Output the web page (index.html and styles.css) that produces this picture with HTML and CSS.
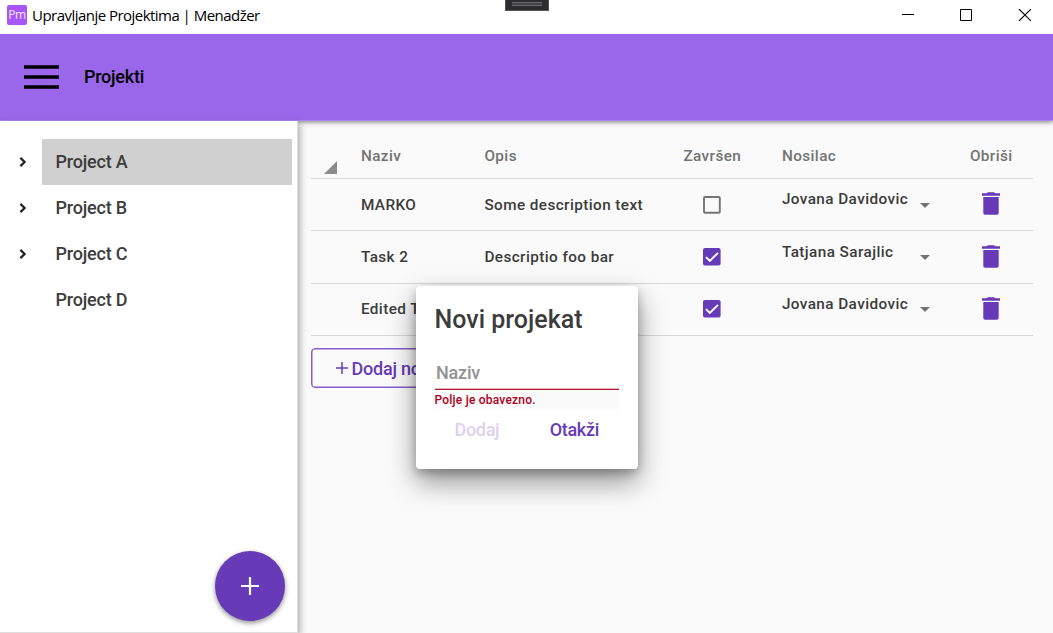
FILE: index.html
```html
<!DOCTYPE html>
<html lang="sr-Latn">
<head>
<meta charset="utf-8">
<title>Upravljanje Projektima | Menadžer</title>
<link rel="stylesheet" href="styles.css">
</head>
<body>
<svg class="defs" width="0" height="0">
  <symbol id="trash" viewBox="0 0 18 23"><path d="M0 1.3h4.6L6 .2h6l1.4 1.1H18v2.5H0zM1.3 5h15.4v16a1.8 1.8 0 0 1-1.8 1.8H3.1A1.8 1.8 0 0 1 1.3 21z"/></symbol>
  <symbol id="chevron" viewBox="0 0 8 10"><path d="M1.4 .9 5.6 5 1.4 9.1" fill="none" stroke="#222" stroke-width="2.2"/></symbol>
  <symbol id="box-off" viewBox="0 0 18 18"><rect x="1" y="1" width="15.8" height="15.8" rx="1" fill="none" stroke="#747474" stroke-width="1.9"/></symbol>
  <symbol id="box-on" viewBox="0 0 18 18"><rect width="17.6" height="17.6" rx="2" fill="#673ab7"/><path d="M3 9.2 6.8 13 15 4.8" fill="none" stroke="#fff" stroke-width="1.9"/></symbol>
</svg>
<div class="window">
  <div class="titlebar">
    <span class="logo">Pm</span>
    <span class="title">Upravljanje Projektima | Menadžer</span>
    <div class="controls">
      <svg width="12" height="12"><path d="M0 5.5h12" stroke="#000"/></svg>
      <svg width="12" height="12"><path d="M.5.5h11v11H.5z" fill="none" stroke="#000"/></svg>
      <svg width="13" height="12"><path d="M1 0 13 12M13 0 1 12" stroke="#000" stroke-width="1.1"/></svg>
    </div>
    <div class="grip"><i></i></div>
  </div>
  <header class="appbar">
    <svg width="35" height="24"><path d="M0 2h35M0 12h35M0 22h35" stroke="#000" stroke-width="3.5"/></svg>
    <span class="page">Projekti</span>
  </header>
  <div class="body">
    <aside class="sidebar">
      <ul class="tree">
        <li><svg class="chev"><use href="#chevron"/></svg><span class="node selected">Project A</span></li>
        <li><svg class="chev"><use href="#chevron"/></svg><span class="node">Project B</span></li>
        <li><svg class="chev"><use href="#chevron"/></svg><span class="node">Project C</span></li>
        <li><span class="chev"></span><span class="node">Project D</span></li>
      </ul>
      <button class="fab"><svg width="18" height="18"><path d="M9 0v18M0 9h18" stroke="#fff" stroke-width="2.2"/></svg></button>
    </aside>
    <main class="content">
      <div class="grid">
        <div class="row head">
          <span class="corner"><svg width="13" height="13"><path d="M13 0v13H0z" fill="#8c8c8c"/></svg></span>
          <span>Naziv</span><span>Opis</span><span>Završen</span><span>Nosilac</span><span>Obriši</span>
        </div>
        <div class="row">
          <span></span><span>MARKO</span><span>Some description text</span>
          <span class="mid"><svg class="box"><use href="#box-off"/></svg></span>
          <span class="owner">Jovana Davidovic<i class="arrow"></i></span>
          <span class="mid"><svg class="trash"><use href="#trash"/></svg></span>
        </div>
        <div class="row">
          <span></span><span>Task 2</span><span>Descriptio foo bar</span>
          <span class="mid"><svg class="box"><use href="#box-on"/></svg></span>
          <span class="owner">Tatjana Sarajlic<i class="arrow"></i></span>
          <span class="mid"><svg class="trash"><use href="#trash"/></svg></span>
        </div>
        <div class="row">
          <span></span><span>Edited T</span><span></span>
          <span class="mid"><svg class="box"><use href="#box-on"/></svg></span>
          <span class="owner">Jovana Davidovic<i class="arrow"></i></span>
          <span class="mid"><svg class="trash"><use href="#trash"/></svg></span>
        </div>
      </div>
      <button class="add"><svg width="12" height="12"><path d="M6 0v12M0 6h12" stroke="#673ab7" stroke-width="1.5"/></svg>Dodaj no</button>
    </main>
  </div>
  <div class="dialog">
    <h2>Novi projekat</h2>
    <div class="field">Naziv</div>
    <div class="error">Polje je obavezno.</div>
    <div class="actions"><button class="disabled">Dodaj</button><button>Otakži</button></div>
  </div>
</div>
</body>
</html>
```

FILE: styles.css
```css
* { box-sizing: border-box; }
body { margin: 0; font-family: Roboto, sans-serif; font-weight: 500; color: #3c3c3c; }
button { font: inherit; letter-spacing: inherit; background: none; border: 0; padding: 0; }
svg { display: block; flex: none; }
.defs { position: absolute; }
.window { position: relative; width: 1053px; height: 633px; display: flex; flex-direction: column; overflow: hidden; background: #fafafa; }

.titlebar { position: relative; z-index: 4; height: 34px; flex: none; background: #fff; display: flex; align-items: flex-start; padding: 5px 22px 0 7px; }
.logo { width: 20px; height: 20px; border-radius: 2px; background: #a855f7; color: #f3e5ff; font: 400 12px/20px "Open Sans", sans-serif; text-align: center; letter-spacing: -.3px; }
.title { margin-left: 5px; font: 400 15px/21px "Open Sans", sans-serif; color: #000; letter-spacing: -.53px; white-space: nowrap; }
.controls { margin: 4px 0 0 auto; display: flex; gap: 46px; }
.grip { position: absolute; left: 505px; top: 0; width: 44px; height: 11px; background: #2d2d30; border: solid #555; border-width: 0 1px 1px; padding: 2px 6px; }
.grip i { display: block; height: 4px; border: solid #696969; border-width: 1px 0; background: #444; }

.appbar { position: relative; z-index: 2; height: 87px; flex: none; background: #9b67ea; border-bottom: 1px solid #af85ee; display: flex; align-items: center; padding-left: 24px; box-shadow: 0 1px 5px rgba(0,0,0,.5); }
.page { margin: -2px 0 0 25px; font-size: 18px; letter-spacing: -.25px; color: #000; }

.body { flex: 1; display: flex; min-height: 0; }
.sidebar { position: relative; z-index: 3; width: 298px; background: #fff; border-right: 1px solid #ddd; border-bottom: 1px solid #ddd; box-shadow: 2px 3px 7px rgba(0,0,0,.32); display: flex; flex-direction: column; justify-content: space-between; padding: 18px 5.5px 11px 0; }
.tree { list-style: none; margin: 0; padding: 0; font-size: 18px; letter-spacing: -.22px; }
.tree li { display: flex; align-items: center; height: 46px; padding-left: 19px; }
.chev { width: 8px; height: 10px; margin-right: 14.6px; }
.node { flex: 1; height: 46px; line-height: 46px; padding-left: 14px; }
.selected { background: #d0d0d0; }
.fab { align-self: flex-end; width: 70px; height: 70px; margin-right: 6.5px; border-radius: 50%; background: #673ab7; display: grid; place-items: center; box-shadow: 0 2px 5px rgba(0,0,0,.45); }

.content { flex: 1; padding: 12px 20px 0 12.6px; }
.row { display: grid; grid-template-columns: 30px 123.5px 199px 98.5px 188px 1fr; height: 52.4px; align-items: center; border-bottom: 1px solid #d8d8d8; font-size: 15.3px; letter-spacing: .42px; white-space: nowrap; }
.row > span { padding-left: 20.3px; }
.row > .corner { align-self: end; padding: 0 0 4px 13px; }
.head { height: 46px; color: #737373; }
.box { width: 18px; height: 18px; margin: 0 0 0 20px; }
.trash { width: 18px; height: 23px; margin: -1.5px 0 0 12px; fill: #673ab7; }
.row > .owner { display: flex; align-items: center; justify-content: space-between; padding: 0 20px 11px 20.3px; }
.arrow { width: 0; height: 0; border: 5px solid transparent; border-top-color: #737373; border-bottom: 0; transform: translateY(6px); }
.add { display: flex; align-items: center; gap: 4px; width: 150px; height: 40px; margin-top: 12px; padding-left: 24px; border: 1px solid #8561c5; border-radius: 4px; box-shadow: inset 0 0 0 .5px #8561c5; color: #673ab7; font-size: 18px; letter-spacing: -.25px; white-space: nowrap; }

.dialog { position: absolute; z-index: 5; left: 416px; top: 286px; width: 222px; height: 182.5px; border-radius: 4px; background: #fff; padding: 16px 19px 0; box-shadow: 0 13px 28px rgba(0,0,0,.42), 0 4px 10px rgba(0,0,0,.24); }
.dialog h2 { margin: 0 0 0 -.5px; font: 500 25px/36px Roboto, sans-serif; }
.field { margin-top: 18px; height: 34px; line-height: 34px; padding-left: 1px; font-size: 18px; letter-spacing: -.2px; color: #929292; border-bottom: 1px solid #b3203c; box-shadow: inset 0 -1px #e3b0b9; }
.error { height: 19px; background: #fafafa; color: #b00020; font-size: 12px; line-height: 20px; letter-spacing: .22px; text-indent: -.5px; }
.actions { display: flex; justify-content: space-between; padding: 9px 20px 0 19.5px; font-size: 18px; line-height: 24px; letter-spacing: -.3px; }
.actions button { color: #673ab7; }
.actions .disabled { color: #dcd2ee; }
```
